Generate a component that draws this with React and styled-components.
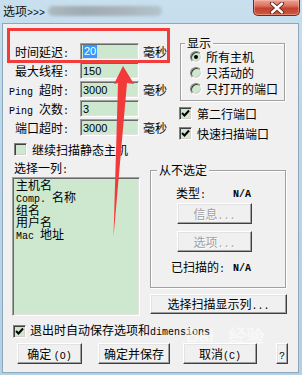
import React from "react";
import styled, { createGlobalStyle } from "styled-components";

const CJK = `"Noto Sans CJK SC", "Noto Sans", sans-serif`;
const MONO = `"Liberation Mono", "DejaVu Sans Mono", monospace`;

const Global = createGlobalStyle`
  html, body { margin: 0; padding: 0; }
  body { width: 302px; height: 375px; overflow: hidden; background: #bcd6e9; }
  * { box-sizing: border-box; }
`;

const Window = styled.div`
  position: relative;
  width: 302px;
  height: 375px;
  display: flex;
  flex-direction: column;
  background: linear-gradient(180deg, #c8dfee 0%, #bdd7ea 30%, #b4d0e5 100%);
  font-family: ${CJK};
  font-size: 12px;
  color: #000;
`;

const TitleBar = styled.div`
  height: 23px;
  display: flex;
  align-items: flex-start;
  padding-left: 3px;
`;

const Title = styled.span`
  margin-top: 4px;
  line-height: 13px;
  white-space: nowrap;
  color: #111;
`;

const Blur = styled.div`
  width: 114px;
  height: 10px;
  margin: 6px 0 0 3px;
  border-radius: 5px;
  background: linear-gradient(90deg, #aeb9bf 0%, #9fabb2 30%, #a7b2b8 60%, #b4c3cb 100%);
  filter: blur(1.5px);
`;

const CloseButton = styled.div`
  margin-left: auto;
  margin-right: 2px;
  width: 47px;
  height: 16px;
  border: 1px solid #6b2a22;
  border-top: none;
  border-radius: 0 0 5px 5px;
  background: linear-gradient(180deg, #eca395 0%, #dc715f 40%, #c2412f 55%, #cf5a3f 100%);
  box-shadow: inset 0 0 0 1px rgba(255, 200, 190, 0.45);
  display: flex;
  align-items: center;
  justify-content: center;
`;

const Client = styled.div`
  flex: 1;
  margin: 0 3px 2px 2px;
  background: #f0f0f0;
  border: 1px solid #8ea8bb;
  padding: 13px 12px 0 4px;
  display: flex;
  flex-direction: column;
`;

const TopSection = styled.div`
  display: grid;
  grid-template-columns: 173px 106px;
`;

const LeftCol = styled.div`
  padding-top: 6px;
  display: flex;
  flex-direction: column;
`;

const SettingsGrid = styled.div`
  display: grid;
  grid-template-columns: 73px 59px auto;
  grid-auto-rows: 17px;
  row-gap: 2px;
`;

const Label = styled.div`
  text-align: right;
  padding-right: 11px;
  white-space: pre;
  line-height: 17px;
`;

const Mono = styled.span`
  font-family: ${MONO};
  font-size: ${(p) => (p.$size ? p.$size : 10)}px;
  font-weight: ${(p) => (p.$bold ? 700 : 400)};
  white-space: pre;
`;

const Field = styled.div`
  height: 17px;
  background: #cde8cf;
  border: 1px solid;
  border-color: #a0a0a0 #ffffff #ffffff #a0a0a0;
  box-shadow: inset 1px 1px 0 #696969, inset -1px -1px 0 #e3e3e3;
  padding-left: 2px;
  display: flex;
  align-items: center;
  font-family: "Liberation Sans", Arial, sans-serif;
  font-size: 11px;
`;

const Selected = styled.span`
  background: #3399ff;
  color: #fff;
  padding: 0 1px;
  line-height: 13px;
`;

const Unit = styled.div`
  padding-left: 4px;
  line-height: 17px;
  white-space: nowrap;
`;

const CheckRow = styled.div`
  display: flex;
  align-items: center;
  gap: ${(p) => p.$gap || 5}px;
  height: 13px;
  margin-top: ${(p) => p.$mt || 0}px;
  margin-left: ${(p) => p.$ml || 0}px;
  line-height: 12px;
  white-space: nowrap;
`;

const Box = styled.div`
  width: 13px;
  height: 13px;
  flex: none;
  background: #cde8cf;
  border: 1px solid;
  border-color: #808080 #ffffff #ffffff #808080;
  box-shadow: inset 1px 1px 0 #404040, inset -1px -1px 0 #d4d0c8;
  display: flex;
  align-items: center;
  justify-content: center;
`;

const RightCol = styled.div`
  display: flex;
  flex-direction: column;
`;

const Group = styled.fieldset`
  margin: 0;
  padding: 0 0 ${(p) => p.$pb || 0}px 0;
  min-width: 0;
  width: ${(p) => p.$w}px;
  border: 1px solid #a0a0a0;
  box-shadow: inset 1px 1px 0 #fff, 1px 1px 0 #fff;
`;

const Legend = styled.legend`
  margin-left: ${(p) => p.$ml || 4}px;
  padding: 0 2px;
  line-height: 12px;
  background: #f0f0f0;
`;

const RadioList = styled.div`
  padding-left: 9px;
  display: flex;
  flex-direction: column;
`;

const RadioRow = styled.div`
  height: 16px;
  display: flex;
  align-items: center;
  gap: 4px;
  line-height: 12px;
  white-space: nowrap;
`;

const Radio = styled.div`
  width: 12px;
  height: 12px;
  border-radius: 50%;
  flex: none;
  background: #cde8cf;
  border: 1px solid;
  border-color: #808080 #ffffff #ffffff #808080;
  box-shadow: inset 1px 1px 0 #404040, inset -1px -1px 0 #d4d0c8;
  display: flex;
  align-items: center;
  justify-content: center;
  &::after {
    content: "";
    width: 4px;
    height: 4px;
    border-radius: 50%;
    background: ${(p) => (p.$on ? "#000" : "transparent")};
  }
`;

const MiddleSection = styled.div`
  margin: 6px 0 0 5px;
  display: grid;
  grid-template-columns: 128px 137px;
  column-gap: 10px;
`;

const MidLeft = styled.div`
  display: flex;
  flex-direction: column;
`;

const ListLabel = styled.div`
  margin-left: 2px;
  line-height: 12px;
  height: 12px;
`;

const ListBox = styled.div`
  margin-top: 3px;
  height: 139px;
  background: #cde8cf;
  border: 1px solid;
  border-color: #a0a0a0 #ffffff #ffffff #a0a0a0;
  box-shadow: inset 1px 1px 0 #696969, inset -1px -1px 0 #e3e3e3;
  padding: 1px 3px;
`;

const ListItem = styled.div`
  line-height: 12.3px;
  height: 12.3px;
  white-space: pre;
`;

const MidRight = styled.div`
  padding-top: 2px;
  display: flex;
  flex-direction: column;
`;

const InfoRow = styled.div`
  display: grid;
  grid-template-columns: 82px auto;
  align-items: center;
  height: 12px;
  line-height: 12px;
  margin-top: ${(p) => p.$mt}px;
  white-space: nowrap;
  & > :first-child {
    padding-left: ${(p) => p.$pl}px;
  }
`;

const Button = styled.div`
  width: ${(p) => p.$w}px;
  height: ${(p) => p.$h || 21}px;
  margin-top: ${(p) => p.$mt || 0}px;
  margin-left: ${(p) => p.$ml || 0}px;
  flex: none;
  background: #f0f0f0;
  border: 1px solid;
  border-color: #ffffff #404040 #404040 #ffffff;
  box-shadow: inset -1px -1px 0 #a0a0a0, inset 1px 1px 0 #e3e3e3;
  text-align: center;
  line-height: ${(p) => (p.$h || 21) - 2}px;
  white-space: pre;
  color: ${(p) => (p.$disabled ? "#a0a0a0" : "#000")};
  text-shadow: ${(p) => (p.$disabled ? "1px 1px 0 #fff" : "none")};
`;

const ButtonRow = styled.div`
  display: flex;
  margin-top: 5px;
`;

const Overlay = styled.svg`
  position: absolute;
  left: 0;
  top: 0;
  pointer-events: none;
`;

const Watermark = styled.div`
  position: absolute;
  left: 186px;
  top: 326px;
  font-family: "Liberation Sans", Arial, sans-serif;
  font-weight: 700;
  font-size: 18px;
  line-height: 20px;
  color: rgba(255, 255, 255, 0.5);
  pointer-events: none;
  white-space: pre;
`;

const Check = () => (
  <svg width="9" height="9" viewBox="0 0 9 9">
    <path d="M1 4 L3.5 6.5 L8 1.5" fill="none" stroke="#000" strokeWidth="2" />
  </svg>
);

const Colon = () => <Mono>:</Mono>;

export default function App() {
  return (
    <>
      <Global />
      <Window>
        <TitleBar>
          <Title>
            选项<Mono $size={10}>&gt;&gt;&gt;</Mono>
          </Title>
          <Blur />
          <CloseButton>
            <svg width="16" height="12" viewBox="0 0 16 12">
              <path d="M3 1.5 L13 10.5 M13 1.5 L3 10.5" stroke="#5a1e16" strokeWidth="4.2" strokeLinecap="round" />
              <path d="M3 1.5 L13 10.5 M13 1.5 L3 10.5" stroke="#ffffff" strokeWidth="2.4" strokeLinecap="round" />
            </svg>
          </CloseButton>
        </TitleBar>
        <Client>
          <TopSection>
            <LeftCol>
              <SettingsGrid>
                <Label>时间延迟<Colon /></Label>
                <Field><Selected>20</Selected></Field>
                <Unit>毫秒</Unit>
                <Label>最大线程<Colon /></Label>
                <Field>150</Field>
                <Unit />
                <Label><Mono>Ping </Mono>超时<Colon /></Label>
                <Field>3000</Field>
                <Unit>毫秒</Unit>
                <Label><Mono>Ping </Mono>次数<Colon /></Label>
                <Field>3</Field>
                <Unit />
                <Label>端口超时<Colon /></Label>
                <Field>3000</Field>
                <Unit>毫秒</Unit>
              </SettingsGrid>
              <CheckRow $mt={7} $ml={7} $gap={5}>
                <Box />
                <span>继续扫描静态主机</span>
              </CheckRow>
            </LeftCol>
            <RightCol>
              <Group $w={105} $pb={3}>
                <Legend>显示</Legend>
                <RadioList>
                  <RadioRow><Radio $on /><span>所有主机</span></RadioRow>
                  <RadioRow><Radio /><span>只活动的</span></RadioRow>
                  <RadioRow><Radio /><span>只打开的端口</span></RadioRow>
                </RadioList>
              </Group>
              <CheckRow $mt={6} $ml={-1} $gap={5}>
                <Box><Check /></Box>
                <span>第二行端口</span>
              </CheckRow>
              <CheckRow $mt={7} $ml={-1} $gap={5}>
                <Box><Check /></Box>
                <span>快速扫描端口</span>
              </CheckRow>
            </RightCol>
          </TopSection>
          <MiddleSection>
            <MidLeft>
              <ListLabel>选择一列<Colon /></ListLabel>
              <ListBox>
                <ListItem>主机名</ListItem>
                <ListItem><Mono>Comp. </Mono>名称</ListItem>
                <ListItem>组名</ListItem>
                <ListItem>用户名</ListItem>
                <ListItem><Mono>Mac </Mono>地址</ListItem>
              </ListBox>
            </MidLeft>
            <MidRight>
              <Group $w={136} $pb={14}>
                <Legend $ml={6}>从不选定</Legend>
                <InfoRow $mt={11} $pl={25}>
                  <span>类型<Colon /></span>
                  <Mono $bold>N/A</Mono>
                </InfoRow>
                <Button $w={75} $mt={4} $ml={26} $disabled>
                  信息<Mono>...</Mono>
                </Button>
                <Button $w={75} $mt={7} $ml={26} $disabled>
                  选项<Mono>...</Mono>
                </Button>
                <InfoRow $mt={9} $pl={20}>
                  <span>已扫描的<Colon /></span>
                  <Mono $bold>N/A</Mono>
                </InfoRow>
              </Group>
              <Button $w={137} $h={20} $mt={6}>
                选择扫描显示列<Mono>...</Mono>
              </Button>
            </MidRight>
          </MiddleSection>
          <CheckRow $mt={9} $ml={6} $gap={4}>
            <Box><Check /></Box>
            <span>退出时自动保存选项和<Mono>dimensions</Mono></span>
          </CheckRow>
          <ButtonRow>
            <Button $w={65} $ml={10}>确定 <Mono>(O)</Mono></Button>
            <Button $w={72} $ml={16}>确定并保存</Button>
            <Button $w={74} $ml={13}>取消<Mono>(C)</Mono></Button>
            <Button $w={12} $ml={19}><Mono>?</Mono></Button>
          </ButtonRow>
        </Client>
        <Watermark>Bai   经验</Watermark>
        <Overlay width="302" height="375" viewBox="0 0 302 375">
          <rect x="8.5" y="29.5" width="160" height="32" fill="none" stroke="#f23c3c" strokeWidth="3" />
          <polygon
            points="123,66 134,84 127,83 113.5,237 118,83 114,84"
            fill="#f23a3a"
          />
        </Overlay>
      </Window>
    </>
  );
}
